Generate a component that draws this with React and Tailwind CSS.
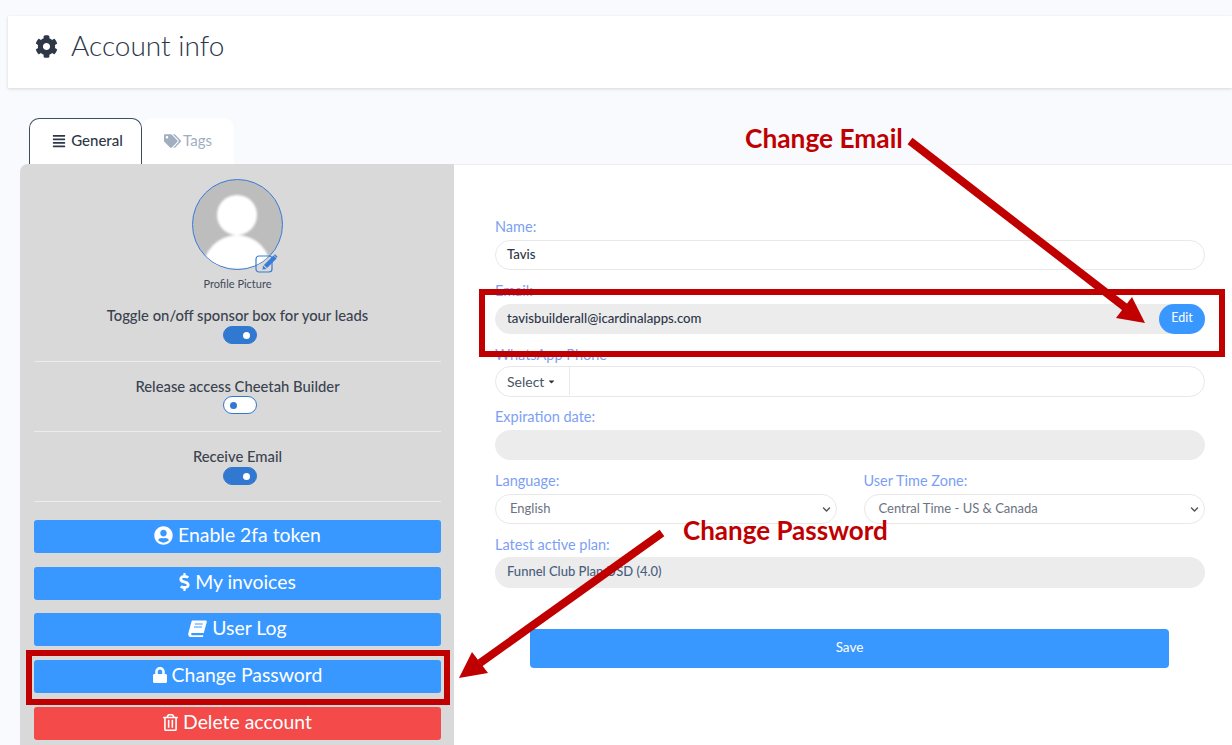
import React from 'react'
import { FaCog, FaAlignJustify, FaTags, FaUserCircle, FaDollarSign, FaLock, FaRegTrashAlt, FaCaretDown, FaChevronDown } from 'react-icons/fa'

const font = { fontFamily: 'Lato, "Noto Sans", sans-serif' }
const labelClass = 'block h-[22px] text-[14.5px] leading-[18px] text-[#7c9ff5]'
const sideText = 'text-center text-[14.8px] font-medium leading-[20px] text-[#3a4350]'

const Toggle = ({ on }) => (
  <div
    className={`ml-[189px] flex h-[18px] w-[34px] items-center rounded-full border px-[6px] ${
      on ? 'justify-end border-[#3178d0] bg-[#3178d0]' : 'justify-start border-[#3178d0] bg-white'
    }`}
  >
    <span className={`h-[7px] w-[7px] rounded-full ${on ? 'bg-white' : 'bg-[#3178d0]'}`} />
  </div>
)

const SideButton = ({ icon, label, red, className }) => (
  <button
    className={`flex h-[33px] w-full items-center justify-center gap-[5px] rounded-[3px] pb-[3px] text-[19.4px] text-white ${
      red ? 'bg-[#f44a4a]' : 'bg-[#3898ff]'
    } ${className || ''}`}
  >
    {icon}
    <span>{label}</span>
  </button>
)

const Field = ({ label, value, disabled, className }) => (
  <div className={className}>
    <label className={labelClass}>{label}</label>
    <div
      className={`flex h-[30px] items-center rounded-full border px-[11px] pb-[1px] text-[13.2px] font-medium ${
        disabled ? 'border-[#ececec] bg-[#ececec]' : 'border-[#e8e8e8] bg-white'
      } text-[#2d3748]`}
    >
      {value}
    </div>
  </div>
)

const SelectField = ({ label, value }) => (
  <div className="flex-1">
    <label className={labelClass}>{label}</label>
    <div className="flex h-[30px] items-center justify-between rounded-full border border-[#e8e8e8] bg-white pl-[14px] pr-[5px] text-[13px] text-[#6b7280]">
      <span>{value}</span>
      <FaChevronDown className="h-[9px] w-[9px] text-[#555]" />
    </div>
  </div>
)

const AvatarEdit = () => (
  <svg className="absolute left-[63px] top-[75px]" width="23" height="19" viewBox="0 0 23 19" fill="none">
    <rect x="1" y="2" width="16" height="16" rx="3" stroke="#3a7bd5" strokeWidth="1.2" />
    <path d="M20 3 L10.5 12.5" stroke="#3a7bd5" strokeWidth="4.5" />
    <path d="M7.5 15.5 L8 11.5 L11.5 15 Z" fill="#3a7bd5" />
    <path d="M19.5 0.8 L22 3.3" stroke="#3a7bd5" strokeWidth="1.5" />
  </svg>
)

const BookIcon = () => (
  <svg width="19" height="17" viewBox="0 0 19 17">
    <path
      d="M5 0.5 H17.5 C18.5 0.5 19 1.2 18.7 2.2 L15.8 13 H4.2 C2.8 13 2.8 15.2 4.2 15.2 H15.3 L15 17 H3 C0.8 17 -0.2 15 0.4 13 L3.4 1.8 C3.6 1 4.2 0.5 5 0.5 Z"
      fill="#fff"
    />
    <path d="M6.8 4 H14.8 M6 7 H14" stroke="#3898ff" strokeWidth="1" />
  </svg>
)

const Annotations = () => (
  <>
    <div className="absolute left-[479px] top-[289px] h-[68px] w-[746px] border-[6px] border-[#c00000]" />
    <div className="absolute left-[26px] top-[650px] h-[55px] w-[424px] border-[6px] border-[#c00000]" />
    <svg className="absolute left-0 top-0" width="1232" height="745">
      <line x1="910" y1="141" x2="1126" y2="308" stroke="#c00000" strokeWidth="8" />
      <polygon points="1145,323 1116,318 1132,297" fill="#c00000" />
      <line x1="662" y1="533" x2="480" y2="663" stroke="#c00000" strokeWidth="8" />
      <polygon points="459,678 472,652 488,673" fill="#c00000" />
    </svg>
    <span className="absolute left-[745px] top-[122px] text-[26.3px] font-bold leading-[32px] text-[#c00000]">
      Change Email
    </span>
    <span className="absolute left-[683px] top-[514px] text-[26px] font-bold leading-[32px] text-[#c00000]">
      Change Password
    </span>
  </>
)

export default function App() {
  return (
    <div className="relative h-[745px] w-[1232px] overflow-hidden bg-[#f9fafe] pl-2 pt-4" style={font}>
      {/* page title */}
      <div className="flex h-[72px] items-start gap-[13px] bg-white pl-[27px] pt-[12px] shadow-[0_1px_3px_rgba(0,0,0,0.15)]">
        <FaCog className="mt-[7px] h-[23px] w-[23px] text-[#2d3748]" />
        <h1 className="text-[28px] font-light leading-[34px] text-[#2d3748]">Account info</h1>
      </div>

      {/* tabs */}
      <div className="mt-[30px] flex h-[46px] pl-[21px]">
        <div className="flex w-[113px] items-center justify-center gap-[5px] rounded-t-[10px] border border-b-0 border-[#3f4d63] bg-white pb-[2px] pl-[4px] text-[15px] font-medium text-[#2d3748]">
          <FaAlignJustify className="h-[14px] w-[14px]" />
          General
        </div>
        <div className="flex w-[92px] items-center justify-center gap-[2px] rounded-t-[10px] bg-white pb-[1px] text-[15px] text-[#a0aec0]">
          <FaTags className="h-[16px] w-[17px]" />
          Tags
        </div>
      </div>

      <div className="ml-[12px] flex h-[581px]">
        {/* left panel */}
        <div className="w-[434px] rounded-tl-[8px] bg-[#d9d9d9] pl-[14px] pr-[13px] pt-[15px]">
          <div className="relative ml-[158px] h-[92px] w-[91px]">
            <div className="h-[91px] w-[91px] overflow-hidden rounded-full border border-[#3a7bd5] bg-[#bdbdbd]">
              <svg className="blur-[1px]" viewBox="0 0 89 89" width="89" height="89">
                <circle cx="44" cy="35" r="20" fill="#fff" />
                <ellipse cx="44" cy="90" rx="34" ry="35" fill="#fff" />
              </svg>
            </div>
            <AvatarEdit />
          </div>
          <p className="mt-[5px] text-center text-[11px] leading-[15px] text-[#3f4a5a]">Profile Picture</p>
          <p className={`mt-[14px] ${sideText}`}>Toggle on/off sponsor box for your leads</p>
          <div className="mt-[1px]"><Toggle on /></div>
          <hr className="mt-[17px] border-t border-[#ececec]" />
          <p className={`mt-[14px] ${sideText}`}>Release access Cheetah Builder</p>
          <Toggle />
          <hr className="mt-[17px] border-t border-[#ececec]" />
          <p className={`mt-[14px] ${sideText}`}>Receive Email</p>
          <div className="mt-[1px]"><Toggle on /></div>
          <hr className="mt-[16px] border-t border-[#ececec]" />
          <SideButton className="mt-[18px]" icon={<FaUserCircle className="h-[19px] w-[19px]" />} label="Enable 2fa token" />
          <SideButton className="mt-[14px]" icon={<FaDollarSign className="h-[18px] w-[11px]" />} label="My invoices" />
          <SideButton className="mt-[13px]" icon={<BookIcon />} label="User Log" />
          <SideButton className="mt-[14px]" icon={<FaLock className="h-[16px] w-[14px]" />} label="Change Password" />
          <SideButton className="mt-[14px]" red icon={<FaRegTrashAlt className="h-[17px] w-[15px]" />} label="Delete account" />
        </div>

        {/* form */}
        <div className="flex-1 border-t border-[#eeeef2] bg-white pl-[41px] pr-[27px] pt-[53px]">
          <Field label="Name:" value="Tavis" />
          <div className="relative mt-[12px]">
            <Field label="Email:" value="tavisbuilderall@icardinalapps.com" disabled />
            <button className="absolute bottom-0 right-0 h-[30px] w-[46px] rounded-full bg-[#3898ff] pb-[1px] text-[12.5px] text-white">Edit</button>
          </div>
          <div className="mt-[10px]">
            <label className="block h-[22px] pt-[2px] text-[14.5px] leading-[18px] text-[#7c9ff5]">WhatsApp Phone</label>
            <div className="flex h-[31px] items-center rounded-full border border-[#e8e8e8] bg-white pb-[1px] text-[14px] text-[#4a5568]">
              <div className="flex h-full w-[74px] items-center gap-[4px] border-r border-[#e8e8e8] pl-[11px]">
                Select
                <FaCaretDown className="h-[9px] w-[7px] text-[#333]" />
              </div>
            </div>
          </div>
          <Field className="mt-[11px]" label="Expiration date:" value="" disabled />
          <div className="mt-[12px] flex gap-[27px]">
            <SelectField label="Language:" value="English" />
            <SelectField label="User Time Zone:" value="Central Time - US & Canada" />
          </div>
          <div className="mt-[11px]">
            <label className="block h-[22px] pt-[1px] text-[14.5px] leading-[18px] text-[#7c9ff5]">Latest active plan:</label>
            <div className="flex h-[31px] items-center rounded-full bg-[#ececec] px-[12px] pb-[1px] text-[13px] font-medium text-[#4a5f80]">Funnel Club Plan USD (4.0)</div>
          </div>
          <button className="ml-[35px] mt-[41px] h-[39px] w-[639px] rounded-[4px] bg-[#3898ff] pb-[2px] text-[13.5px] text-white">Save</button>
        </div>
      </div>

      <Annotations />
    </div>
  )
}
